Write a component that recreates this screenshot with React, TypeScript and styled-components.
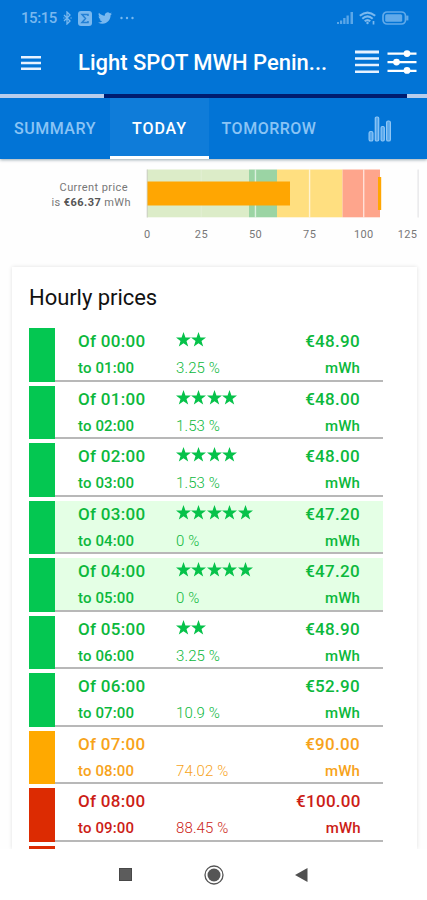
import React from "react";
import styled, { createGlobalStyle } from "styled-components";

const GlobalStyle = createGlobalStyle`
  * { box-sizing: border-box; }
  html, body { margin: 0; padding: 0; background: #fff; overflow: hidden; }
  body { font-family: Roboto, "Liberation Sans", sans-serif; }
  svg { display: block; flex: none; }
`;

const Screen = styled.div`
  width: 427px;
  height: 900px;
  overflow: hidden;
  display: flex;
  flex-direction: column;
  background: #fefefe;
`;

const Header = styled.header`
  flex: none;
  background: #0274d6;
  color: #fff;
  box-shadow: 0 1px 3px rgba(0, 40, 60, 0.4);
`;

const StatusBar = styled.div`
  height: 36px;
  padding: 0 18px 0 21px;
  display: flex;
  align-items: center;
  justify-content: space-between;
  color: #79b8ef;
`;

const StatusGroup = styled.div<{ $gap: number }>`
  display: flex;
  align-items: center;
  gap: ${(p) => p.$gap}px;
`;

const Clock = styled.span`
  width: 36px;
  font-size: 15px;
  line-height: 18px;
  font-weight: 500;
  letter-spacing: -0.45px;
`;

const AppBar = styled.div`
  height: 57px;
  padding: 0 10px 4px 21px;
  display: flex;
  align-items: center;
`;

const Title = styled.h1`
  flex: 1;
  margin: 0 0 0 37px;
  font-size: 22px;
  line-height: 28px;
  font-weight: 500;
  letter-spacing: 0;
  white-space: nowrap;
`;

const Actions = styled.div`
  display: flex;
  align-items: center;
  gap: 8px;
  padding-bottom: 2px;
`;

const Strip = styled.div`
  height: 5px;
  padding: 1px 0;
  display: grid;
  grid-template-columns: 104px 303px 20px;
`;

const StripPart = styled.span<{ $dark?: boolean }>`
  height: 4px;
  background: ${(p) => (p.$dark ? "#001c70" : "#b8cdec")};
`;

const Tabs = styled.nav`
  height: 61px;
  display: grid;
  grid-template-columns: 110px 99px 120px 98px;
`;

const Tab = styled.div<{ $active?: boolean; $icon?: boolean }>`
  display: flex;
  align-items: center;
  justify-content: center;
  padding-top: ${(p) => (p.$active ? 3 : 0)}px;
  padding-left: ${(p) => (p.$icon ? 3 : 0)}px;
  font-size: 16px;
  font-weight: 500;
  letter-spacing: ${(p) => (p.$active ? 0.9 : 0.5)}px;
  color: ${(p) => (p.$active ? "#fff" : "#8ac4f5")};
  background: ${(p) => (p.$active ? "#0f7cd9" : "transparent")};
  border-bottom: ${(p) => (p.$active ? "3px solid #fff" : "0")};
`;

const PriceOverview = styled.section`
  flex: none;
  height: 108px;
  display: grid;
  grid-template-columns: 133px 294px;
`;

const PriceLabel = styled.div`
  padding: 21px 2px 0 0;
  font-size: 11px;
  line-height: 15px;
  letter-spacing: 0.42px;
  text-align: right;
  color: #777;
  b { color: #555; font-weight: 700; }
`;

const LabelLine = styled.div<{ $inset?: number }>`
  padding-right: ${(p) => p.$inset ?? 0}px;
`;

const Card = styled.section`
  flex: 1;
  min-height: 0;
  margin: 0 10px 0 12px;
  padding: 16px 34px 0 17px;
  overflow: hidden;
  background: #fff;
  box-shadow: 0 0 4px rgba(0, 0, 0, 0.12);
`;

const CardTitle = styled.h2`
  margin: 0 0 15px;
  font-size: 22px;
  line-height: 30px;
  font-weight: 400;
  letter-spacing: -0.05px;
  color: #111;
`;

const Row = styled.div<{ $color: string; $best?: boolean }>`
  height: 53.5px;
  margin-bottom: 4px;
  display: grid;
  grid-template-columns: 26px 121px 120px 1fr;
  color: ${(p) => p.$color};
  background: ${(p) => (p.$best ? "#e4ffe5" : "#fff")};
  border-bottom: 2px solid #b8b8b8;
`;

const Swatch = styled.span<{ $color: string }>`
  width: 26px;
  height: 53.5px;
  display: block;
  background: ${(p) => p.$color};
`;

const Cell = styled.div<{ $kind: "hours" | "rating" | "price" }>`
  padding-top: 1px;
  padding-left: ${(p) => (p.$kind === "hours" ? 23 : 0)}px;
  padding-right: ${(p) => (p.$kind === "price" ? 23 : 0)}px;
  text-align: ${(p) => (p.$kind === "price" ? "right" : "left")};
  white-space: nowrap;
`;

const Primary = styled.div`
  height: 24px;
  font-size: 17px;
  line-height: 24px;
  font-weight: 500;
  letter-spacing: 0.3px;
`;

const Secondary = styled.div<{ $light?: boolean }>`
  padding-top: 3px;
  font-size: 15px;
  line-height: 24px;
  font-weight: ${(p) => (p.$light ? 300 : 500)};
  letter-spacing: 0.12px;
`;

const Stars = styled.div`
  height: 24px;
  padding: 3px 0 0;
  display: flex;
  gap: 0.4px;
`;

const NavBar = styled.footer`
  flex: none;
  height: 51px;
  padding: 0 119px 0 119px;
  display: flex;
  align-items: center;
  justify-content: space-between;
  background: #fff;
`;

const StatusIcons = () => (
  <>
    <svg width="9" height="14" viewBox="0 0 9 14" fill="none" stroke="currentColor" strokeWidth="1.3">
      <path d="M1 4l6 6-3 3V1l3 3-6 6" />
      <path d="M.5 7h.9M7.6 7h.9" />
    </svg>
    <svg width="14" height="15" viewBox="0 0 14 15">
      <rect width="14" height="15" rx="3" fill="currentColor" />
      <path d="M10 5V3.5H4l3.5 4L4 11.500h6V10" fill="none" stroke="#2380d5" strokeWidth="1.5" />
    </svg>
    <svg width="14" height="12" viewBox="0 2 24 20" fill="currentColor">
      <path d="M23.950 4.570a10 10 0 0 1-2.820.77 4.960 4.960 0 0 0 2.160-2.720c-.950.550-2 .950-3.130 1.180a4.920 4.920 0 0 0-8.380 4.480C7.690 8.090 4.070 6.130 1.640 3.160a4.820 4.820 0 0 0-.67 2.480c0 1.700.87 3.210 2.190 4.090a4.900 4.900 0 0 1-2.230-.61v.06a4.920 4.920 0 0 0 3.950 4.830 5 5 0 0 1-2.210.08 4.940 4.940 0 0 0 4.600 3.420A9.870 9.870 0 0 1 0 19.540a14 14 0 0 0 7.550 2.210c9.050 0 14-7.500 14-13.980 0-.21 0-.42-.02-.63a9.940 9.940 0 0 0 2.420-2.570z" />
    </svg>
    <svg width="17" height="4" viewBox="-2 0 17 4" fill="currentColor">
      <circle cx="1.500" cy="2" r="1.200" /><circle cx="7" cy="2" r="1.200" /><circle cx="12.500" cy="2" r="1.200" />
    </svg>
  </>
);

const SignalIcons = () => (
  <>
    <svg width="16" height="12" viewBox="0 0 16 12" fill="currentColor" opacity=".75">
      <path d="M0 10h2v2H0zM3 8.500h2.200V12H3zM6.200 6h2.300v6H6.200zM9.500 3.500h2.300V12H9.500zM13.500 0H16v12h-2.500z" />
    </svg>
    <svg width="17" height="14" viewBox="0 0 17 14" fill="none" stroke="currentColor" strokeWidth="2.100">
      <path d="M.8 4.800q7.700-6.500 15.400 0M3.300 7.700q5.200-4.500 10.400 0M5.700 10.300q2.800-2.500 5.600 0" />
      <circle cx="8.500" cy="12" r="1.200" fill="currentColor" stroke="none" />
      <path d="M14.500 10v3.500" strokeWidth="1.700" />
    </svg>
    <svg width="27" height="14" viewBox="0 0 27 14" fill="none" stroke="currentColor" opacity=".8">
      <rect x="1" y="1" width="22.500" height="12" rx="4" strokeWidth="1.700" />
      <rect x="3.200" y="3.200" width="17" height="7.600" rx="1.500" fill="currentColor" stroke="none" />
      <path d="M25.300 4.600v4.800" strokeWidth="2.200" />
    </svg>
  </>
);

const MenuIcon = () => (
  <svg width="20" height="16" viewBox="0 0 20 16" fill="#e7f2ff">
    <path d="M0 1h20v2.500H0zM0 6.800h20v2.500H0zM0 12.600h20v2.500H0z" />
  </svg>
);

const LinesIcon = () => (
  <svg width="24" height="24" viewBox="0 0 24 24" fill="#e7f2ff">
    <path d="M0 .5h24v3H0zM0 7.200h24v2.600H0zM0 13.700h24v2.600H0zM0 20.400h24V23H0z" />
  </svg>
);

const SlidersIcon = () => (
  <svg width="30" height="24" viewBox="0 0 30 24" fill="#fff">
    <path d="M.5 2.500h29v2.200H.5zM.5 11h29v2.200H.5zM.5 19.700h29v2.200H.5z" />
    <circle cx="20" cy="3.600" r="3.400" /><circle cx="9.500" cy="12.100" r="3.400" /><circle cx="20" cy="20.400" r="3.400" />
  </svg>
);

const BarsIcon = () => (
  <svg width="24" height="26" viewBox="0 0 24 26" fill="#57a7ec" stroke="#8fc6f5" strokeWidth="1.200">
    <rect x="1.100" y="15.500" width="3.800" height="9.500" rx="1.600" />
    <rect x="7.300" y="1" width="3.400" height="24" rx="1.200" />
    <rect x="13.100" y="10.500" width="3.200" height="14.500" rx="1.200" />
    <rect x="18.600" y="5" width="3.800" height="20" rx="1.600" />
  </svg>
);

const Star = () => (
  <svg width="15" height="15" viewBox="0 0 24 24" fill="#06c24a">
    <path d="M12 0l3.100 8.700H24l-7.200 5.600 2.700 8.900L12 17.900l-7.500 5.300 2.700-8.900L0 8.700h8.900z" />
  </svg>
);

const ticks = [0, 25, 50, 75, 100, 125];
const chartX = (value: number) => 14.3 + value * 2.165;

const PriceChart = () => (
  <svg width="294" height="108" viewBox="133 159 294 108" fontFamily="Roboto, sans-serif">
    <g transform="translate(133 0)">
      <rect x="14" y="169.500" width="102" height="47.800" fill="#dcecc8" />
      <rect x="116" y="169.500" width="28" height="47.800" fill="#9bd4a4" />
      <rect x="144" y="169.500" width="65.500" height="47.800" fill="#ffdf80" />
      <rect x="209.500" y="169.500" width="37.500" height="47.800" fill="#fea58c" />
      {ticks.slice(1, 5).map((t) => (
        <rect key={t} x={chartX(t) - 0.8} y="169.500" width="1.400" height="47.800" fill="#fff" opacity={t === 25 ? 0.15 : 0.65} />
      ))}
      <rect x="13.700" y="169.500" width="1" height="48" fill="#c9cec2" />
      <rect x="284.600" y="169.500" width="1" height="48" fill="#dedee2" />
      <rect x="14.500" y="181.500" width="142.500" height="24" fill="#ffa602" />
      <rect x="245" y="177" width="3.200" height="33" fill="#ffa602" />
      <g fontSize="11" fill="#777" textAnchor="middle" letterSpacing=".4">
        {ticks.map((t) => (
          <text key={t} x={t === 125 ? 274.500 : chartX(t)} y="237.600">{t}</text>
        ))}
      </g>
    </g>
  </svg>
);

const tones = {
  green: { bar: "#04c751", text: "#0cb83c" },
  amber: { bar: "#ffa900", text: "#f7a31a" },
  red: { bar: "#dc2b02", text: "#cc1d16" },
};

type Hour = { from: string; to: string; stars: number; pct: string; price: string; tone: keyof typeof tones; best?: boolean };

const hours: Hour[] = [
  { from: "00:00", to: "01:00", stars: 2, pct: "3.25 %", price: "€48.90", tone: "green" },
  { from: "01:00", to: "02:00", stars: 4, pct: "1.53 %", price: "€48.00", tone: "green" },
  { from: "02:00", to: "03:00", stars: 4, pct: "1.53 %", price: "€48.00", tone: "green" },
  { from: "03:00", to: "04:00", stars: 5, pct: "0 %", price: "€47.20", tone: "green", best: true },
  { from: "04:00", to: "05:00", stars: 5, pct: "0 %", price: "€47.20", tone: "green", best: true },
  { from: "05:00", to: "06:00", stars: 2, pct: "3.25 %", price: "€48.90", tone: "green" },
  { from: "06:00", to: "07:00", stars: 0, pct: "10.9 %", price: "€52.90", tone: "green" },
  { from: "07:00", to: "08:00", stars: 0, pct: "74.02 %", price: "€90.00", tone: "amber" },
  { from: "08:00", to: "09:00", stars: 0, pct: "88.45 %", price: "€100.00", tone: "red" },
];

const HourRow = ({ hour }: { hour: Hour }) => {
  const tone = tones[hour.tone];
  return (
    <Row $color={tone.text} $best={hour.best}>
      <Swatch $color={tone.bar} />
      <Cell $kind="hours">
        <Primary>Of {hour.from}</Primary>
        <Secondary>to {hour.to}</Secondary>
      </Cell>
      <Cell $kind="rating">
        <Stars>
          {Array.from({ length: hour.stars }, (_, i) => <Star key={i} />)}
        </Stars>
        <Secondary $light>{hour.pct}</Secondary>
      </Cell>
      <Cell $kind="price">
        <Primary>{hour.price}</Primary>
        <Secondary>mWh</Secondary>
      </Cell>
    </Row>
  );
};

export default function App() {
  return (
    <Screen>
      <GlobalStyle />
      <Header>
        <StatusBar>
          <StatusGroup $gap={6}>
            <Clock>15:15</Clock>
            <StatusIcons />
          </StatusGroup>
          <StatusGroup $gap={6}>
            <SignalIcons />
          </StatusGroup>
        </StatusBar>
        <AppBar>
          <MenuIcon />
          <Title>Light SPOT MWH Penin...</Title>
          <Actions>
            <LinesIcon />
            <SlidersIcon />
          </Actions>
        </AppBar>
        <Strip>
          <StripPart />
          <StripPart $dark />
          <StripPart />
        </Strip>
        <Tabs>
          <Tab>SUMMARY</Tab>
          <Tab $active>TODAY</Tab>
          <Tab>TOMORROW</Tab>
          <Tab $icon><BarsIcon /></Tab>
        </Tabs>
      </Header>
      <PriceOverview>
        <PriceLabel>
          <LabelLine $inset={3}>Current price</LabelLine>
          <LabelLine>is <b>€66.37</b> mWh</LabelLine>
        </PriceLabel>
        <PriceChart />
      </PriceOverview>
      <Card>
        <CardTitle>Hourly prices</CardTitle>
        {hours.map((h) => <HourRow key={h.from} hour={h} />)}
        <Swatch $color={tones.red.bar} />
      </Card>
      <NavBar>
        <svg width="13" height="13" viewBox="0 0 13 13">
          <rect x=".5" y=".5" width="12" height="12" fill="#5c5c5c" stroke="#484848" />
        </svg>
        <svg width="20" height="20" viewBox="0 0 20 20">
          <circle cx="10" cy="10" r="9" fill="none" stroke="#555" strokeWidth="1.300" />
          <circle cx="10" cy="10" r="6.500" fill="#555" />
        </svg>
        <svg width="13" height="14" viewBox="0 0 13 14">
          <path d="M0 7L12.500 0v14z" fill="#505050" />
        </svg>
      </NavBar>
    </Screen>
  );
}
